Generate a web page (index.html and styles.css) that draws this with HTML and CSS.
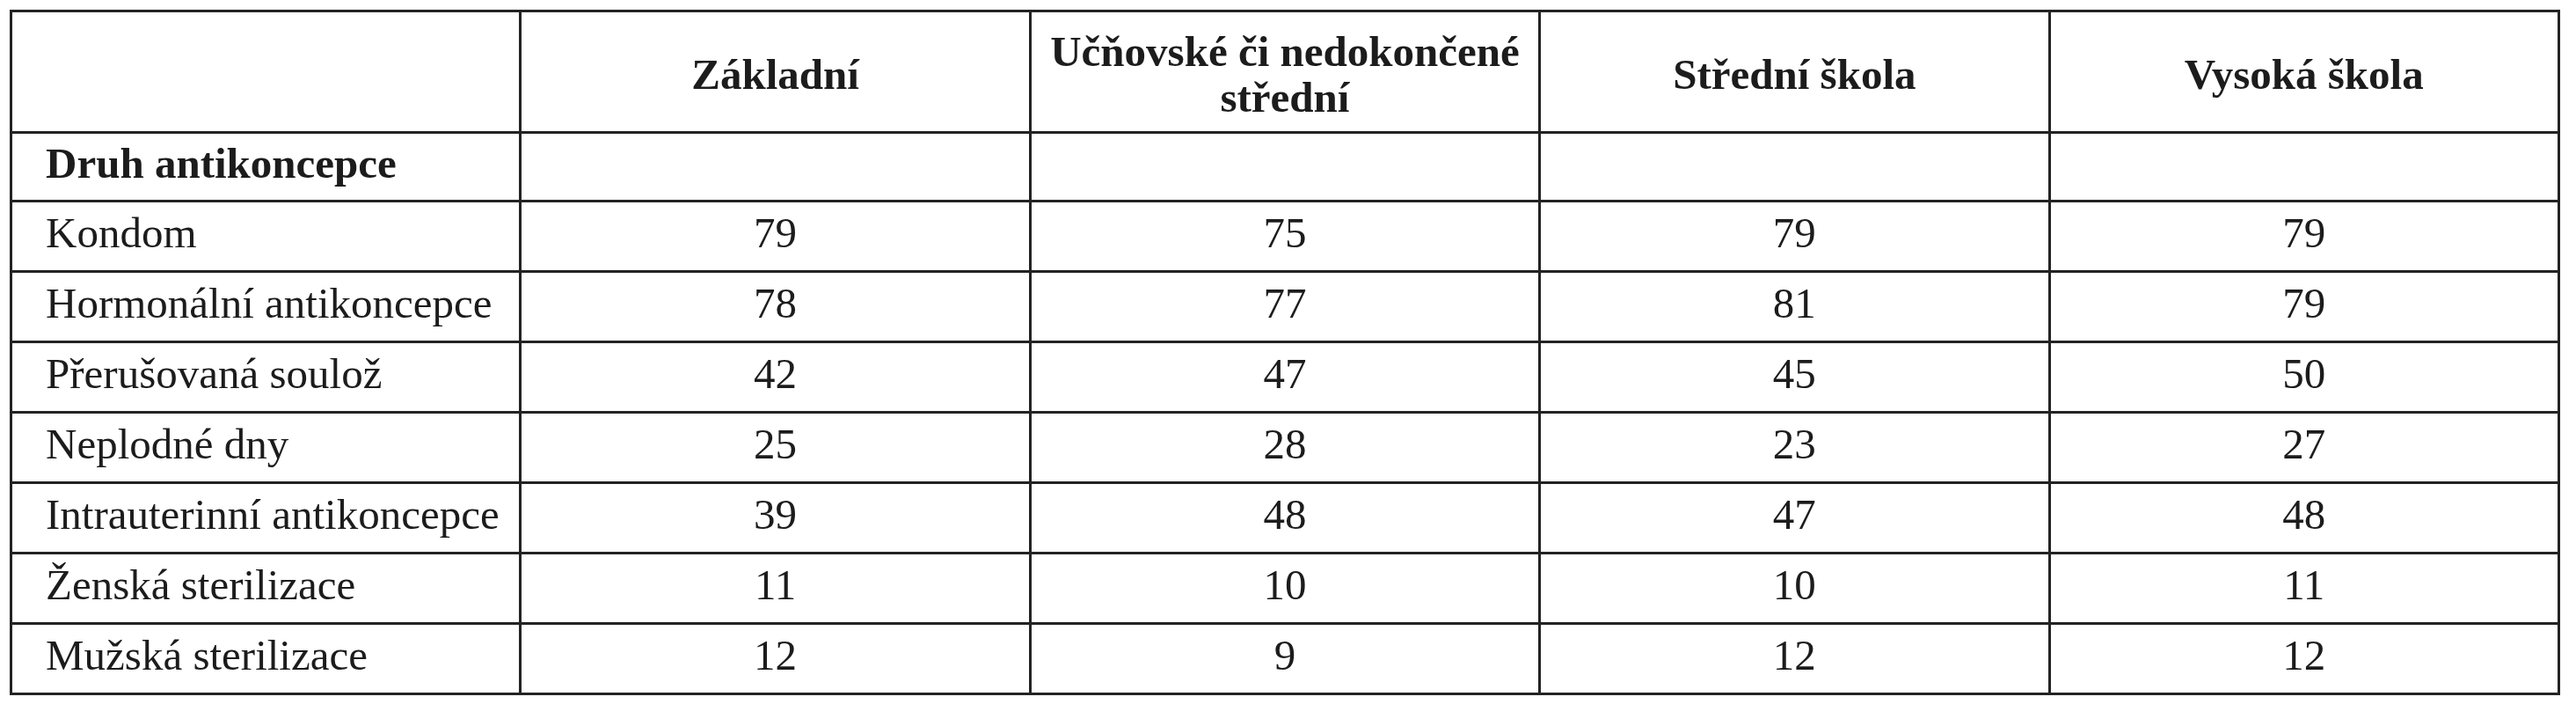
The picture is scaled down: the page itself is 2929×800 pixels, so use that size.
FILE: index.html
```html
<!DOCTYPE html>
<html lang="cs">
<head>
<meta charset="utf-8">
<title>Druh antikoncepce podle vzdělání</title>
<link rel="stylesheet" href="styles.css">
</head>
<body>
<table class="data">
  <colgroup>
    <col class="c"><col class="c"><col class="c"><col class="c"><col class="c">
  </colgroup>
  <tr class="head">
    <th></th>
    <th>Základní</th>
    <th>Učňovské či nedokončené střední</th>
    <th>Střední škola</th>
    <th>Vysoká škola</th>
  </tr>
  <tr class="group">
    <th class="label">Druh antikoncepce</th>
    <td></td><td></td><td></td><td></td>
  </tr>
  <tr class="row"><td class="label">Kondom</td><td>79</td><td>75</td><td>79</td><td>79</td></tr>
  <tr class="row"><td class="label">Hormonální antikoncepce</td><td>78</td><td>77</td><td>81</td><td>79</td></tr>
  <tr class="row"><td class="label">Přerušovaná soulož</td><td>42</td><td>47</td><td>45</td><td>50</td></tr>
  <tr class="row"><td class="label">Neplodné dny</td><td>25</td><td>28</td><td>23</td><td>27</td></tr>
  <tr class="row"><td class="label">Intrauterinní antikoncepce</td><td>39</td><td>48</td><td>47</td><td>48</td></tr>
  <tr class="row"><td class="label">Ženská sterilizace</td><td>11</td><td>10</td><td>10</td><td>11</td></tr>
  <tr class="row"><td class="label">Mužská sterilizace</td><td>12</td><td>9</td><td>12</td><td>12</td></tr>
</table>
</body>
</html>
```
FILE: styles.css
```css
html, body {
  margin: 0;
  padding: 0;
  background: #ffffff;
}
body {
  padding: 11px 0 0 11px;
  font-family: "Liberation Serif", "Times New Roman", serif;
  color: #1c1c1c;
}
.data {
  border-collapse: separate;
  border-spacing: 0;
  table-layout: fixed;
  width: 2900px;
  border-top: 3px solid #232323;
  border-left: 3px solid #232323;
}
.data th,
.data td {
  border-right: 3px solid #232323;
  border-bottom: 3px solid #232323;
  padding: 0 0 8px 0;
  font-size: 49px;
  text-align: center;
  vertical-align: middle;
  font-weight: normal;
}
.data th {
  font-weight: bold;
}
.head {
  height: 138px;
}
.head th {
  line-height: 52px;
  padding: 6px 6px 0;
}
.group {
  height: 78px;
}
.row {
  height: 80px;
}
.data .label {
  text-align: left;
  padding-left: 38px;
}
```
